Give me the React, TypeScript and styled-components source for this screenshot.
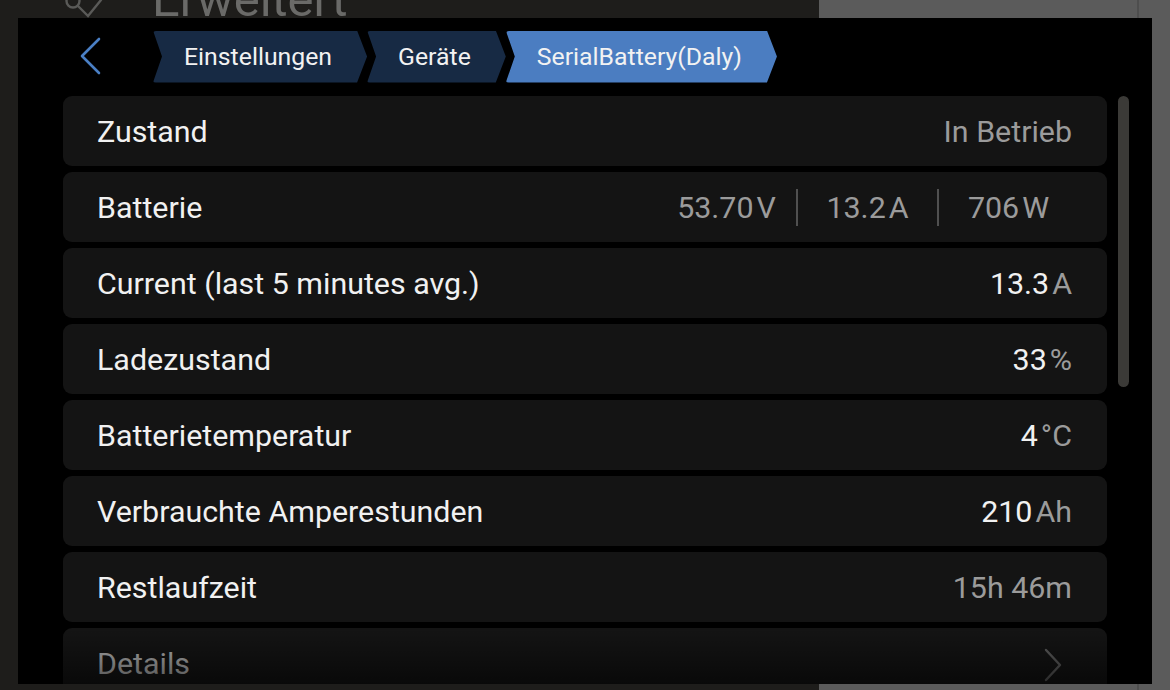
import React from "react";
import styled, { createGlobalStyle } from "styled-components";

const GlobalStyle = createGlobalStyle`
  html, body { margin: 0; padding: 0; }
  body {
    background: #1e1d1b;
    font-family: Roboto, "Noto Sans", "Liberation Sans", sans-serif;
    -webkit-font-smoothing: antialiased;
  }
`;

const Screen = styled.div`
  position: relative;
  width: 1170px;
  height: 690px;
  overflow: hidden;
  background: linear-gradient(
    to right,
    #1e1d1b 0,
    #1e1d1b 819px,
    #5b5b5b 819px,
    #5b5b5b 1137px,
    #4e4e4e 1137px,
    #4e4e4e 1139px,
    #5b5b5b 1139px
  );
`;

const Backdrop = styled.div`
  display: flex;
  align-items: flex-end;
  gap: 48px;
  height: 18px;
  padding-left: 64px;
  overflow: hidden;
  width: 755px;
`;

const BackdropTitle = styled.div`
  font-size: 49px;
  line-height: 18px;
  height: 18px;
  color: #6a6a68;
  margin-bottom: 9px;
`;

const BackdropIcon = styled.svg`
  width: 40px;
  height: 18px;
  flex: none;
`;

const Panel = styled.div`
  position: absolute;
  left: 18px;
  top: 18px;
  width: 1134px;
  height: 666px;
  background: #000;
  overflow: hidden;
  display: flex;
  flex-direction: column;
`;

const Header = styled.div`
  display: flex;
  align-items: center;
  height: 78px;
  padding-left: 60px;
  flex: none;
`;

const BackButton = styled.button`
  width: 24px;
  height: 40px;
  padding: 0;
  border: 0;
  background: none;
  display: flex;
  align-items: center;
  justify-content: center;
  margin-right: 51px;
  margin-top: -2px;
`;

const Crumbs = styled.div`
  display: flex;
  align-items: center;
  height: 52px;
  margin-top: -1px;
`;

const Crumb = styled.div<{ $active?: boolean }>`
  height: 52px;
  display: flex;
  align-items: center;
  padding: 0 35px 0 31px;
  font-size: 24.8px;
  color: #f2f2f2;
  background: ${(p) => (p.$active ? "#4b7dc1" : "#172a44")};
  border-radius: 3px;
  clip-path: polygon(
    0 0,
    calc(100% - 10px) 0,
    100% 50%,
    calc(100% - 10px) 100%,
    0 100%,
    9px 50%
  );
`;

const List = styled.div`
  display: flex;
  flex-direction: column;
  gap: 6px;
  padding: 0 45px 0 45px;
`;

const Row = styled.div`
  flex: none;
  height: 70px;
  border-radius: 9px;
  background: #141414;
  display: flex;
  align-items: center;
  justify-content: space-between;
  padding: 0 35px 0 34px;
`;

const Label = styled.div<{ $dim?: boolean }>`
  font-size: 30.4px;
  color: ${(p) => (p.$dim ? "#b5b5b5" : "#f1f1f1")};
`;

const Value = styled.div`
  display: flex;
  align-items: baseline;
  font-size: 30.4px;
`;

const Num = styled.span<{ $muted?: boolean }>`
  color: ${(p) => (p.$muted ? "#9b9b9b" : "#f1f1f1")};
`;

const Unit = styled.span`
  color: #9b9b9b;
  margin-left: 3px;
`;

const Quantities = styled.div`
  display: flex;
  align-items: center;
  margin-right: -6px;
`;

const Cell = styled.div`
  width: 139px;
  display: flex;
  justify-content: center;
`;

const Divider = styled.div`
  width: 2px;
  height: 37px;
  background: #505050;
`;

const Scrollbar = styled.div`
  position: absolute;
  left: 1100px;
  top: 78px;
  width: 11px;
  height: 291px;
  border-radius: 6px;
  background: #3b3a37;
`;

const Fade = styled.div`
  position: absolute;
  left: 0;
  right: 0;
  bottom: 0;
  height: 56px;
  background: linear-gradient(to bottom, rgba(0, 0, 0, 0) 0%, rgba(0, 0, 0, 0.55) 100%);
  pointer-events: none;
`;

const DetailsChevron = styled.svg`
  margin-right: 9px;
  margin-top: 4px;
  flex: none;
`;

type Item = { label: string; num?: string; unit?: string; muted?: boolean };

const items: Item[] = [
  { label: "Zustand", num: "In Betrieb", muted: true },
  { label: "Current (last 5 minutes avg.)", num: "13.3", unit: "A" },
  { label: "Ladezustand", num: "33", unit: "%" },
  { label: "Batterietemperatur", num: "4", unit: "°C" },
  { label: "Verbrauchte Amperestunden", num: "210", unit: "Ah" },
  { label: "Restlaufzeit", num: "15h 46m", muted: true },
];

function ValueRow({ item }: { item: Item }) {
  return (
    <Row>
      <Label>{item.label}</Label>
      <Value>
        <Num $muted={item.muted}>{item.num}</Num>
        {item.unit && <Unit>{item.unit}</Unit>}
      </Value>
    </Row>
  );
}

export default function App() {
  const battery = [
    { n: "53.70", u: "V" },
    { n: "13.2", u: "A" },
    { n: "706", u: "W" },
  ];
  return (
    <Screen>
      <GlobalStyle />
      <Backdrop>
        <BackdropIcon viewBox="0 0 40 18" fill="none" stroke="#5a5a58" strokeWidth="2.4" strokeLinecap="round">
          <circle cx="9" cy="1" r="6.5" />
          <path d="M14 6 L24 16 L37 0" />
        </BackdropIcon>
        <BackdropTitle>Erweitert</BackdropTitle>
      </Backdrop>
      <Panel>
        <Header>
          <BackButton aria-label="Zurück">
            <svg width="22" height="38" viewBox="0 0 22 38" fill="none">
              <path d="M20 2 L3 19 L20 36" stroke="#4a7fc4" strokeWidth="2.6" strokeLinecap="round" strokeLinejoin="round" />
            </svg>
          </BackButton>
          <Crumbs>
            <Crumb>Einstellungen</Crumb>
            <Crumb>Geräte</Crumb>
            <Crumb $active>SerialBattery(Daly)</Crumb>
          </Crumbs>
        </Header>
        <List>
          <ValueRow item={items[0]} />
          <Row>
            <Label>Batterie</Label>
            <Quantities>
              {battery.map((b, i) => (
                <React.Fragment key={b.u}>
                  {i > 0 && <Divider />}
                  <Cell>
                    <Value>
                      <Num $muted>{b.n}</Num>
                      <Unit>{b.u}</Unit>
                    </Value>
                  </Cell>
                </React.Fragment>
              ))}
            </Quantities>
          </Row>
          {items.slice(1).map((it) => (
            <ValueRow key={it.label} item={it} />
          ))}
          <Row>
            <Label $dim>Details</Label>
            <DetailsChevron width="20" height="36" viewBox="0 0 20 36" fill="none">
              <path d="M3 3 L17 18 L3 33" stroke="#5d5d5d" strokeWidth="2.4" strokeLinecap="round" strokeLinejoin="round" />
            </DetailsChevron>
          </Row>
        </List>
        <Scrollbar />
        <Fade />
      </Panel>
    </Screen>
  );
}
